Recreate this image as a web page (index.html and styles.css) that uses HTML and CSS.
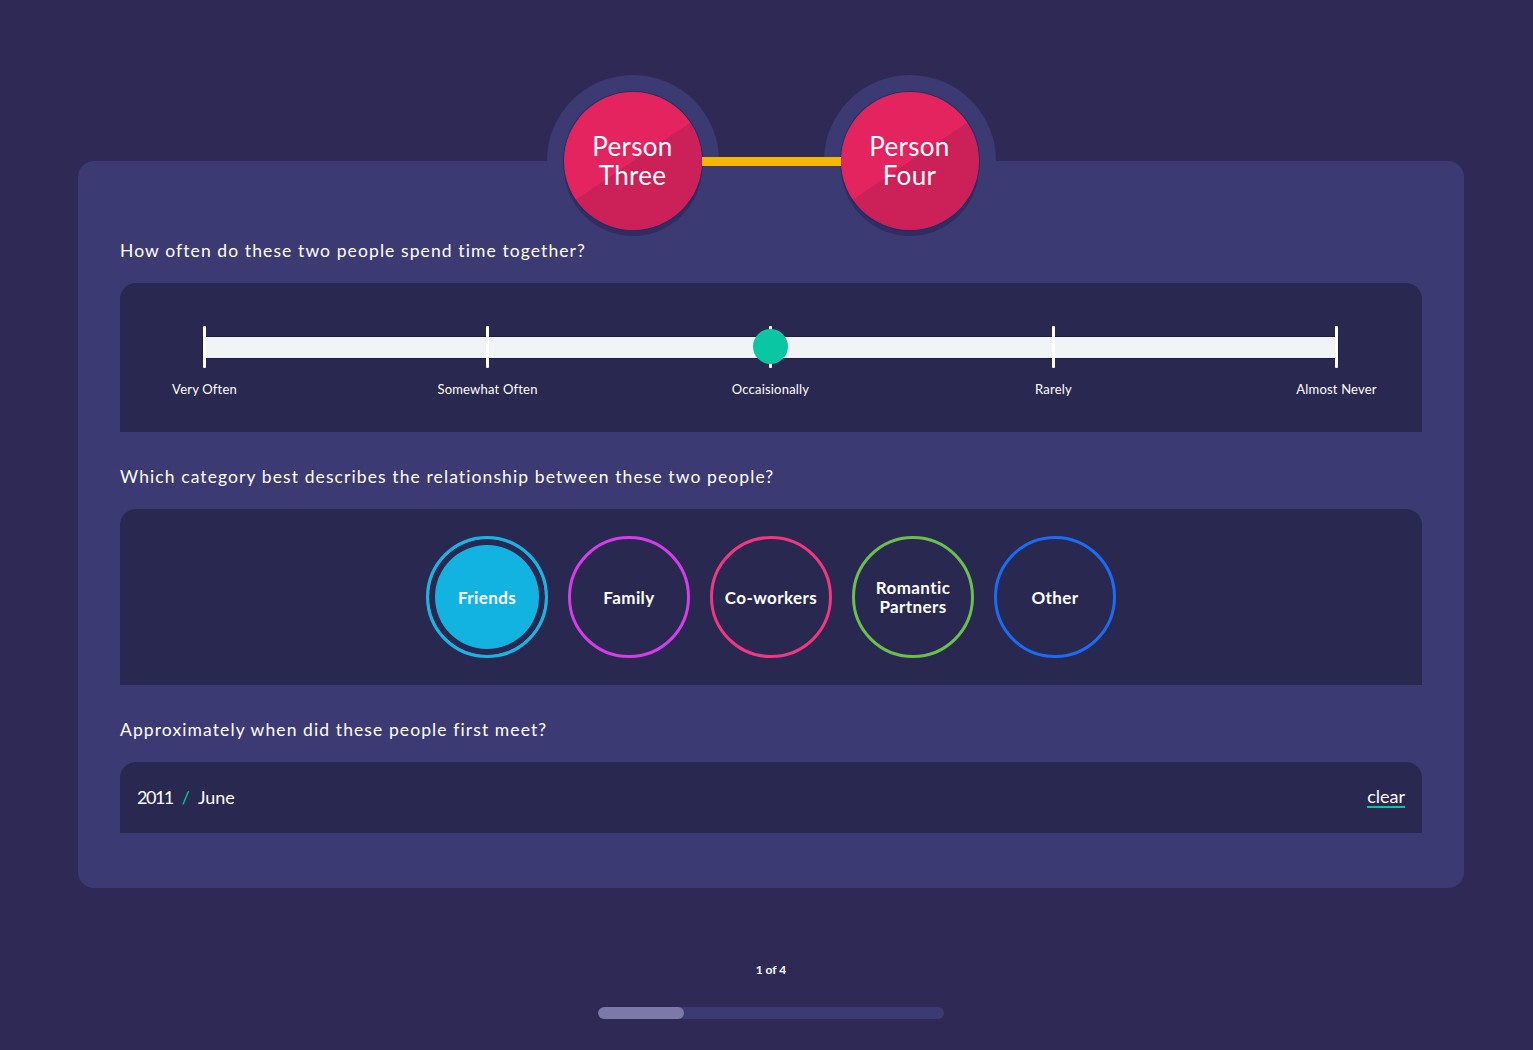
FILE: index.html
```html
<!DOCTYPE html>
<html lang="en">
<head>
<meta charset="utf-8">
<title>Relationship</title>
<link rel="stylesheet" href="styles.css">
</head>
<body>
<main class="page">
  <section class="card">
    <div class="pair">
      <div class="bubble"><div class="person"><span class="pline">Person</span><span class="pline">Three</span></div></div>
      <div class="link"></div>
      <div class="bubble"><div class="person"><span class="pline">Person</span><span class="pline">Four</span></div></div>
    </div>

    <h2 class="question">How often do these two people spend time together?</h2>
    <div class="panel panel-slider">
      <div class="slider">
        <div class="track"></div>
        <div class="stops">
          <div class="stop"><span class="tick"></span><span class="stop-label">Very Often</span></div>
          <div class="stop"><span class="tick"></span><span class="stop-label">Somewhat Often</span></div>
          <div class="stop"><span class="tick"></span><span class="stop-label">Occaisionally</span></div>
          <div class="stop"><span class="tick"></span><span class="stop-label">Rarely</span></div>
          <div class="stop"><span class="tick"></span><span class="stop-label">Almost Never</span></div>
        </div>
        <div class="knob"></div>
      </div>
    </div>

    <h2 class="question q-gap">Which category best describes the relationship between these two people?</h2>
    <div class="panel panel-cats">
      <div class="cat cat-friends selected">Friends</div>
      <div class="cat cat-family">Family</div>
      <div class="cat cat-cowork">Co-workers</div>
      <div class="cat cat-romantic">Romantic<br>Partners</div>
      <div class="cat cat-other">Other</div>
    </div>

    <h2 class="question q-gap">Approximately when did these people first meet?</h2>
    <div class="panel panel-date">
      <div class="date"><span class="year">2011</span><span class="slash">/</span><span>June</span></div>
      <span class="clear">clear</span>
    </div>
  </section>

  <footer class="footer">
    <div class="count">1 of 4</div>
    <div class="progress"><div class="progress-fill"></div></div>
  </footer>
</main>
</body>
</html>
```

FILE: styles.css
```css
html, body {
  margin: 0;
  padding: 0;
}
body {
  background: #2f2a55;
  color: #fff;
  font-family: "Lato", "Noto Sans", sans-serif;
  min-height: 1050px;
}
.page {
  padding: 161px 69px 0 78px;
}
.card {
  display: flow-root;
  background: #3c3a73;
  border-radius: 16px;
  padding: 0 42px 55px;
}
.pair {
  display: flex;
  justify-content: center;
  align-items: center;
  margin-top: -86px;
  margin-bottom: -8px;
  height: 172px;
}
.bubble {
  width: 172px;
  height: 172px;
  border-radius: 50%;
  background: #3c3a73;
  box-sizing: border-box;
  padding: 17px;
  position: relative;
  z-index: 1;
}
.person {
  width: 138px;
  height: 138px;
  border-radius: 50%;
  background: linear-gradient(146deg, #e3245f 50%, #cc2158 50%);
  box-shadow: 0 0 0 1px #2b2a63, 0 6px 0 #2f2d62;
  display: flex;
  flex-direction: column;
  align-items: center;
  justify-content: center;
  text-align: center;
  font-size: 26px;
  letter-spacing: 0.3px;
  position: relative;
  z-index: 3;
}
.pline {
  display: block;
  line-height: 29px;
  height: 29px;
}
.link {
  width: 139px;
  height: 9px;
  margin: 0 -17px;
  background: #f5b700;
  position: relative;
  z-index: 2;
}
.question {
  margin: 0;
  font-weight: 400;
  font-size: 17.5px;
  line-height: 24px;
  letter-spacing: 1.1px;
  position: relative;
  z-index: 4;
}
.q-gap {
  margin-top: 33px;
}
.panel {
  background: #292850;
  border-radius: 16px 16px 0 0;
  margin-top: 20px;
  box-sizing: border-box;
}
.panel-slider {
  height: 149px;
  padding: 43px 84px 0 83px;
}
.slider {
  position: relative;
}
.track {
  position: absolute;
  left: 0;
  right: 0;
  top: 11px;
  height: 21px;
  background: #f0f4f6;
  box-shadow: 0 0 0 1px #1d1b45;
}
.stops {
  display: flex;
  justify-content: space-between;
  position: relative;
}
.stop {
  width: 3px;
  display: flex;
  flex-direction: column;
  align-items: center;
}
.tick {
  display: block;
  width: 3px;
  height: 42px;
  background: #fff;
  border-radius: 1px;
}
.stop-label {
  display: block;
  white-space: nowrap;
  margin-top: 13px;
  font-size: 13px;
  line-height: 16px;
  letter-spacing: 0.2px;
}
.knob {
  position: absolute;
  left: 50%;
  top: 3px;
  width: 35px;
  height: 35px;
  margin-left: -17.5px;
  border-radius: 50%;
  background: #0bc6a3;
}
.panel-cats {
  height: 176px;
  display: flex;
  justify-content: center;
  align-items: center;
  gap: 20px;
}
.cat {
  width: 122px;
  height: 122px;
  box-sizing: border-box;
  border-radius: 50%;
  border: 3px solid;
  display: flex;
  align-items: center;
  justify-content: center;
  text-align: center;
  font-weight: 700;
  font-size: 17px;
  line-height: 19px;
  letter-spacing: 0.4px;
}
.cat-friends { border-color: #1ab4e2; }
.cat-friends.selected {
  background: #12b3e1;
  box-shadow: inset 0 0 0 6px #292850;
}
.cat-family { border-color: #d43ee8; }
.cat-cowork { border-color: #f1377f; }
.cat-romantic { border-color: #6bbf4c; }
.cat-other { border-color: #1c6cf2; }
.panel-date {
  height: 71px;
  padding: 0 17px 2px;
  display: flex;
  align-items: center;
  justify-content: space-between;
  font-size: 18px;
}
.date {
  display: flex;
  gap: 8px;
  line-height: 22px;
}
.year {
  letter-spacing: -1.5px;
  margin-right: 1px;
}
.slash {
  color: #0bc6a3;
}
.clear {
  line-height: 20px;
  border-bottom: 2px solid #0bc6a3;
}
.footer {
  display: flex;
  flex-direction: column;
  align-items: center;
}
.count {
  margin-top: 74px;
  font-size: 12px;
  font-weight: 700;
  line-height: 16px;
}
.progress {
  margin-top: 29px;
  width: 346px;
  height: 12px;
  border-radius: 6px;
  background: #3c3a73;
  overflow: hidden;
}
.progress-fill {
  width: 86px;
  height: 100%;
  border-radius: 6px;
  background: #7c79a8;
}
```
